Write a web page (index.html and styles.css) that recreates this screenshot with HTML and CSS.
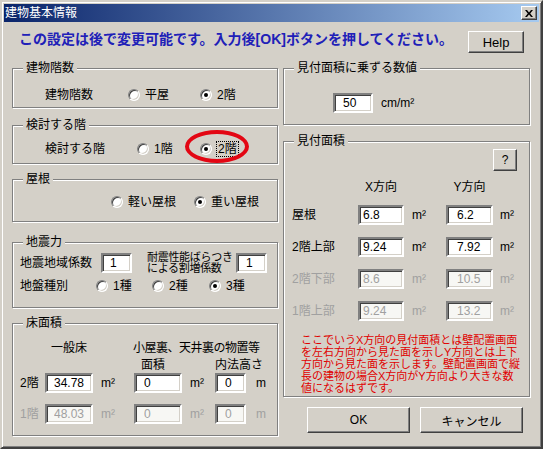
FILE: index.html
```html
<!doctype html>
<html lang="ja">
<head>
  <meta charset="utf-8">
  <title>建物基本情報</title>
  <link rel="stylesheet" href="styles.css">
</head>
<body>

  <div class="window">

    <div class="titlebar">
      <span class="title">建物基本情報</span>
      <span class="close">
        <svg width="8" height="7" viewBox="0 0 8 7"><path d="M0 0H2L4 2.4L6 0H8L5.2 3.5L8 7H6L4 4.6L2 7H0L2.8 3.5Z" fill="#000"/></svg>
      </span>
    </div>

    <div class="dialog">

      <div class="intro">
        <p class="notice">この設定は後で変更可能です。入力後[OK]ボタンを押してください。</p>
        <button class="btn help">Help</button>
      </div>

      <div class="columns">

        <!-- left side -->
        <div class="col col-left">

          <section class="group g-floors">
            <h2 class="group-title">建物階数</h2>
            <div class="row">
              <span class="label">建物階数</span>
              <label class="radio"><i class="dot"></i>平屋</label>
              <label class="radio"><i class="dot on"></i>2階</label>
            </div>
          </section>

          <section class="group g-check">
            <h2 class="group-title">検討する階</h2>
            <div class="row">
              <span class="label">検討する階</span>
              <label class="radio"><i class="dot"></i>1階</label>
              <label class="radio"><i class="dot on"></i><span class="focus">2階</span></label>
            </div>
            <span class="mark"></span>
          </section>

          <section class="group g-roof">
            <h2 class="group-title">屋根</h2>
            <div class="row">
              <label class="radio"><i class="dot"></i>軽い屋根</label>
              <label class="radio"><i class="dot on"></i>重い屋根</label>
            </div>
          </section>

          <section class="group g-quake">
            <h2 class="group-title">地震力</h2>
            <div class="row row-coef">
              <span class="label">地震地域係数</span>
              <input class="field" value="1">
              <span class="label label-two">耐震性能ばらつき<br>による割増係数</span>
              <input class="field field-r" value="1">
            </div>
            <div class="row row-soil">
              <span class="label">地盤種別</span>
              <label class="radio"><i class="dot"></i>1種</label>
              <label class="radio"><i class="dot"></i>2種</label>
              <label class="radio"><i class="dot on"></i>3種</label>
            </div>
          </section>

          <section class="group g-area">
            <h2 class="group-title">床面積</h2>
            <div class="floor-grid">
              <span class="head h-normal">一般床</span>
              <span class="head h-attic">小屋裏、天井裏の物置等</span>

              <span class="head h-size">面積</span>
              <span class="head h-height">内法高さ</span>

              <span class="cell">2階</span>
              <input class="field" value="34.78">
              <span class="unit">m²</span>
              <input class="field field-r" value="0">
              <span class="unit">m²</span>
              <input class="field field-r" value="0">
              <span class="unit unit-m">m</span>

              <span class="cell off">1階</span>
              <input class="field" value="48.03" disabled>
              <span class="unit off">m²</span>
              <input class="field field-r" value="0" disabled>
              <span class="unit off">m²</span>
              <input class="field field-r" value="0" disabled>
              <span class="unit unit-m off">m</span>
            </div>
          </section>

        </div>

        <!-- right side -->
        <div class="col col-right">

          <section class="group g-factor">
            <h2 class="group-title">見付面積に乗ずる数値</h2>
            <div class="row">
              <input class="field field-r" value="50">
              <span class="unit">cm/m²</span>
            </div>
          </section>

          <section class="group g-wind">
            <h2 class="group-title">見付面積</h2>
            <div class="q-row">
              <button class="btn q">?</button>
            </div>
            <div class="wind-grid">
              <span></span>
              <span class="head">X方向</span>
              <span></span>
              <span class="head">Y方向</span>
              <span></span>

              <span class="cell">屋根</span>
              <input class="field field-x" value="6.8">
              <span class="unit">m²</span>
              <input class="field field-y" value="6.2">
              <span class="unit">m²</span>

              <span class="cell">2階上部</span>
              <input class="field field-x" value="9.24">
              <span class="unit">m²</span>
              <input class="field field-y" value="7.92">
              <span class="unit">m²</span>

              <span class="cell off">2階下部</span>
              <input class="field field-x" value="8.6" disabled>
              <span class="unit off">m²</span>
              <input class="field field-y" value="10.5" disabled>
              <span class="unit off">m²</span>

              <span class="cell off">1階上部</span>
              <input class="field field-x" value="9.24" disabled>
              <span class="unit off">m²</span>
              <input class="field field-y" value="13.2" disabled>
              <span class="unit off">m²</span>
            </div>
            <p class="note">ここでいうX方向の見付面積とは壁配置画面<br>を左右方向から見た面を示しY方向とは上下<br>方向から見た面を示します。壁配置画面で縦<br>長の建物の場合X方向がY方向より大きな数<br>値になるはずです。</p>
          </section>

          <div class="actions">
            <button class="btn">OK</button>
            <button class="btn">キャンセル</button>
          </div>

        </div>

      </div>
    </div>
  </div>

</body>
</html>
```

FILE: styles.css
```css
/* Classic dialog look */

* {
  box-sizing: border-box;
}

body {
  margin: 0;
  background: #d4d0c8;
  color: #000;
  font-family: "Liberation Sans", "Noto Sans CJK JP", sans-serif;
  font-size: 12px;
}

.window {
  width: 543px;
  height: 449px;
  padding: 2px;
  background: #d4d0c8;
  border: 2px solid;
  border-color: #d4d0c8 #404040 #404040 #d4d0c8;
  box-shadow: inset 1px 1px #fff, inset -1px -1px #808080;
}

.titlebar {
  height: 18px;
  display: flex;
  align-items: center;
  justify-content: space-between;
  padding: 0 2px 0 1px;
  background: linear-gradient(to right, #0a246a, #a6caf0);
  color: #fff;
}

.title {
  font-size: 12px;
  line-height: 14px;
}

.close {
  width: 16px;
  height: 14px;
  display: flex;
  align-items: center;
  justify-content: center;
  background: #d4d0c8;
  border: 1px solid;
  border-color: #fff #404040 #404040 #fff;
  box-shadow: inset -1px -1px #808080;
}

/* buttons and fields */

.btn {
  margin: 0;
  padding: 0;
  background: #d4d0c8;
  border: 1px solid;
  border-color: #fff #404040 #404040 #fff;
  box-shadow: inset -1px -1px #808080;
  font-family: "Liberation Sans", "Noto Sans CJK JP", sans-serif;
  font-size: 12px;
  color: #000;
  width: 103px;
  height: 26px;
}

.field {
  margin: 0;
  height: 20px;
  padding: 0 0 0 7px;
  background: #fff;
  border: 2px solid;
  border-color: #808080 #fff #fff #808080;
  box-shadow: inset 1px 1px #404040, inset -1px -1px #d4d0c8;
  font-family: "Liberation Sans", "Noto Sans CJK JP", sans-serif;
  font-size: 12px;
  color: #000;
  outline: none;
}

.field:disabled {
  background: #f7f7f4;
  color: #a0a0a0;
}

.off {
  color: #a0a0a0;
}

.radio {
  display: flex;
  align-items: center;
  gap: 5px;
  line-height: 14px;
}

.dot {
  position: relative;
  flex: none;
  width: 12px;
  height: 12px;
  border-radius: 50%;
  background: #fff;
  border: 1px solid;
  border-color: #808080 #fff #fff #808080;
  box-shadow: inset 1px 1px #404040, inset -1px -1px #d4d0c8;
}

.dot.on::after {
  content: "";
  position: absolute;
  left: 3px;
  top: 3px;
  width: 4px;
  height: 4px;
  border-radius: 50%;
  background: #000;
}

.focus {
  outline: 1px dotted #000;
  padding: 0 1px;
}

.unit {
  padding-left: 8px;
  line-height: 14px;
}

/* top message */

.intro {
  display: flex;
  justify-content: space-between;
  align-items: flex-start;
  padding: 9px 15px 0 15px;
}

.notice {
  margin: 0;
  font-size: 14px;
  font-weight: bold;
  line-height: 16px;
  color: #2020b8;
}

.help {
  width: 56px;
  height: 22px;
  font-size: 13px;
}

/* columns and group boxes */

.columns {
  display: flex;
  gap: 5px;
  margin-top: 15px;
  padding-left: 8px;
}

.col {
  display: flex;
  flex-direction: column;
}

.col-left {
  width: 266px;
}

.col-right {
  width: 247px;
}

.group {
  position: relative;
  border: 1px solid #808080;
  box-shadow: 1px 1px 0 #fff, inset 1px 1px 0 #fff;
}

.group-title {
  width: fit-content;
  margin: -8px 0 0 10px;
  padding: 0 3px;
  background: #d4d0c8;
  font-size: 12px;
  font-weight: normal;
  line-height: 14px;
}

.row {
  display: flex;
  align-items: center;
}

.label {
  line-height: 14px;
}

/* left groups */

.g-floors {
  height: 40px;
}

.g-floors .row {
  height: 20px;
  margin-top: 10px;
  padding-left: 32px;
}

.g-floors .label {
  width: 83px;
}

.g-floors .radio:nth-of-type(1) {
  width: 72px;
}

.g-check {
  height: 39px;
  margin-top: 17px;
}

.g-check .row {
  height: 20px;
  margin-top: 7px;
  padding-left: 32px;
}

.g-check .label {
  width: 92px;
}

.g-check .radio:nth-of-type(1) {
  width: 63px;
}

.mark {
  position: absolute;
  left: 172px;
  top: 4px;
  width: 64px;
  height: 33px;
  border: 4px solid #e30613;
  border-radius: 50%;
}

.g-roof {
  height: 43px;
  margin-top: 15px;
}

.g-roof .row {
  height: 20px;
  margin-top: 6px;
  padding-left: 98px;
}

.g-roof .radio:nth-of-type(1) {
  width: 83px;
}

.g-quake {
  height: 66px;
  margin-top: 20px;
}

.row-coef {
  height: 21px;
  margin-top: 3px;
  padding-left: 7px;
}

.row-coef .label {
  width: 81px;
}

.row-coef .field {
  width: 31px;
}

.row-coef .label-two {
  width: 89px;
  margin-left: 15px;
  font-size: 11px;
  letter-spacing: -0.3px;
  line-height: 11px;
  white-space: nowrap;
}

.field-r {
  padding-left: 8px;
}

.row-soil {
  height: 16px;
  margin-top: 5px;
  padding-left: 7px;
}

.row-soil .label {
  width: 76px;
}

.row-soil .radio:nth-of-type(1) {
  width: 56px;
}

.row-soil .radio:nth-of-type(2) {
  width: 57px;
}

.g-area {
  height: 113px;
  margin-top: 15px;
}

.floor-grid {
  display: grid;
  grid-template-columns: 25px 48px 41px 48px 33px 31px 1fr;
  grid-template-rows: 14px 17px 21px 31px;
  align-items: end;
  margin-top: 11px;
  padding-left: 7px;
}

.head {
  line-height: 14px;
}

.cell {
  line-height: 20px;
}

.h-normal {
  grid-column: 2;
  justify-self: center;
}

.h-attic {
  grid-column: 4 / -1;
  margin-left: -1px;
  letter-spacing: -0.5px;
  white-space: nowrap;
}

.h-size {
  grid-column: 4;
  padding-left: 7px;
}

.h-height {
  grid-column: 6 / -1;
}

.floor-grid .field {
  width: 100%;
}

.floor-grid .unit {
  line-height: 20px;
}

.unit-m {
  padding-left: 10px;
}

/* right groups */

.g-factor {
  height: 57px;
}

.g-factor .row {
  height: 20px;
  margin-top: 18px;
  padding-left: 49px;
}

.g-factor .field {
  width: 40px;
}

.g-wind {
  height: 256px;
  margin-top: 16px;
}

.q-row {
  display: flex;
  justify-content: flex-end;
  margin-top: 1px;
  padding-right: 12px;
}

.q {
  width: 24px;
  height: 22px;
}

.wind-grid {
  display: grid;
  grid-template-columns: 66px 46px 42px 47px 1fr;
  grid-template-rows: 14px 31px 32px 32px 32px;
  align-items: end;
  margin-top: 9px;
  padding-left: 8px;
}

.wind-grid .head {
  justify-self: center;
}

.wind-grid .field {
  width: 100%;
}

.wind-grid .unit {
  line-height: 20px;
}

.wind-grid .unit:nth-child(5n) {
  padding-left: 7px;
}

.field-x {
  padding-left: 3px;
}

.field-y {
  padding-left: 9px;
}

.note {
  margin: 13px 0 0;
  padding-left: 17px;
  font-size: 11px;
  line-height: 12px;
  color: #e00000;
}

.actions {
  display: flex;
  justify-content: flex-end;
  gap: 10px;
  margin-top: 10px;
  padding-right: 7px;
}
```
